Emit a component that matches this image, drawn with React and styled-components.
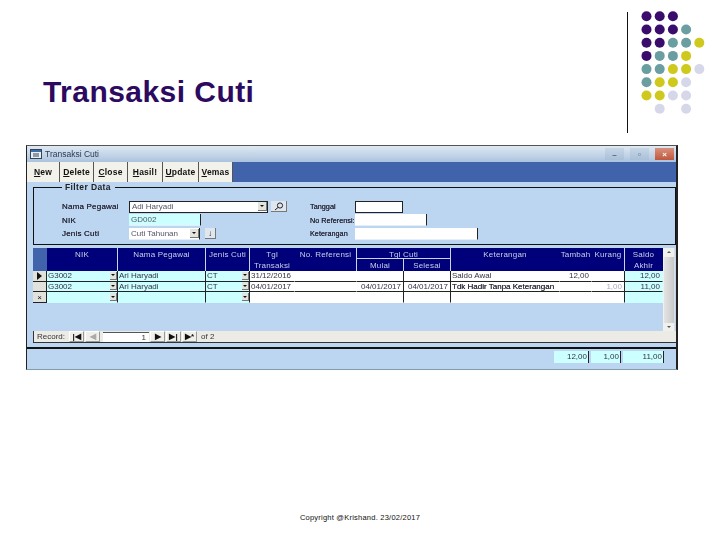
import React from "react";
import styled, { createGlobalStyle } from "styled-components";

const Global = createGlobalStyle`
  html, body { margin: 0; padding: 0; background: #fff; }
  * { box-sizing: border-box; }
`;

const Slide = styled.div`
  width: 720px; height: 540px; display: flex; flex-direction: column;
  background: #fff; font-family: "Liberation Sans", Arial, sans-serif; overflow: hidden;
`;
const Header = styled.header`
  height: 145px; flex: none; display: flex; justify-content: space-between; padding-left: 43px;
`;
const Title = styled.h1`
  margin: 75px 0 0; font-size: 30px; line-height: 34px; font-weight: 700; color: #2c0a60; letter-spacing: 0.45px;
`;
const Deco = styled.svg`width: 93px; height: 145px; flex: none; display: block;`;

const Win = styled.section`
  margin-left: 26px; width: 652px; height: 225px; flex: none; display: flex; flex-direction: column;
  background: #bcd5f0; border-left: 1px solid #222; border-right: 2px solid #222; border-bottom: 1px solid #7f9fa8;
  border-top: 1px solid #555; filter: blur(0.35px);
  font-size: 8px; color: #222;
`;
const TitleBar = styled.div`
  height: 16px; flex: none; display: flex; align-items: center; padding: 0 2px 0 3px; gap: 3px;
  background: linear-gradient(#dfe9f3, #b6cbe2 80%, #a9c2de); font-size: 8.5px; color: #2a3a55;
`;
const TitleText = styled.span`flex: 1;`;
const WinBtn = styled.span`
  width: 19px; height: 12px; margin-left: 3px; display: flex; align-items: center; justify-content: center;
  background: ${p => p.$close ? "linear-gradient(#d9907a,#c0573e)" : "linear-gradient(#c6d6e6,#a9c0d8)"};
  color: ${p => p.$close ? "#fff" : "#456"}; font-size: 8px; font-weight: 700;
`;
const Toolbar = styled.div`
  height: 20px; flex: none; display: flex; background: #4063ab;
`;
const ToolBtn = styled.button`
  width: ${p => p.$w}px; height: 20px; padding: 0; border: 0; border-right: 1px solid #555;
  background: #f2f1ea; font: 700 8.5px "Liberation Sans", Arial, sans-serif; color: #111; letter-spacing: .2px;
  u { text-underline-offset: 1px; }
`;
const Group = styled.fieldset`
  margin: 0 0 3px 6px; padding: 0 0 0 28px; width: 643px; height: 63px; flex: none; border: 1px solid #111; min-width: 0;
  display: block;
`;
const Legend = styled.legend`
  margin-left: 0; padding: 0 4px 0 3px; font-weight: 700; font-size: 8.5px; line-height: 11px; letter-spacing: .4px; color: #222;
`;
const FormCols = styled.div`display: flex; padding-top: 7px;`;
const FormCol = styled.div`
  display: grid; grid-template-columns: ${p => p.$label}px auto; grid-auto-rows: 13.5px; align-items: center; width: ${p => p.$w}px;
`;
const Label = styled.span`
  font-size: ${p => p.$tight ? 7.3 : 8}px; letter-spacing: ${p => p.$tight ? 0 : .2}px; white-space: nowrap; color: #2a2a3a; text-shadow: 0 0 .3px #2a2a3a;
`;
const FieldWrap = styled.div`display: flex; align-items: center; gap: ${p => p.$gap || 0}px;`;
const Field = styled.div`
  width: ${p => p.$w}px; height: 12px; padding-left: 2px; display: flex; align-items: center; justify-content: space-between; font-size: 8px;
  background: ${p => p.$cyan ? "#ccffff" : "#fff"}; color: #556;
  border-right: 1px solid #222; border-bottom: 1px solid ${p => p.$boxed ? "#222" : "#e6eef7"};
  ${p => p.$boxed ? "border-top:1px solid #222;border-left:1px solid #222;" : ""}
`;
const Drop = styled.span`
  width: ${p => p.$w || 9}px; height: ${p => p.$h || 9}px; flex: none; background: #e4e4de; border-right: 1px solid #777; border-bottom: 1px solid #777;
  display: flex; align-items: center; justify-content: center;
  &::after { content: ""; border: 2px solid transparent; border-top: 2.5px solid #111; border-bottom: 0; }
`;
const SquareBtn = styled.span`
  width: ${p => p.$w}px; height: 11px; background: #dfe6ee; border-right: 1px solid #777; border-bottom: 1px solid #777; display: flex; align-items: center; justify-content: center;
`;

const GridWrap = styled.div`margin-left: 6px; width: 643px; height: 95px; flex: none; display: flex; flex-wrap: wrap; align-content: flex-start;`;
const Table = styled.div`
  width: 630px; height: 83px; display: grid; grid-template-columns: 14px 71px 88px 44px 45px 62px 47px 47px 109px 32px 33px 38px;
  grid-template-rows: 11px 12px 10.5px 10.5px 11px 1fr; font-size: 8px;
`;
const Corner = styled.div`grid-row: 1 / span 2; background: #4063ab;`;
const Head = styled.div`
  grid-row: ${p => p.$row || "1 / span 2"}; grid-column: ${p => p.$col || "auto"};
  background: #00007a; color: #c6cfe6; text-align: center; line-height: 11px; padding-top: 1px; letter-spacing: .2px;
  border-right: 1px solid ${p => p.$noLine ? "#00007a" : "#c9d4ea"};
  border-bottom: ${p => p.$under ? "1px solid #c9d4ea" : "0"};
`;
const Sel = styled.div`
  background: #e2e2dc; border-bottom: 1px solid #222; border-right: 1px solid #222; display: flex; align-items: center; justify-content: center; font-size: 8px; color: #111;
`;
const Arrow = styled.span`border-left: 5px solid #111; border-top: 4px solid transparent; border-bottom: 4px solid transparent;`;
const Cell = styled.div`
  display: flex; align-items: center; justify-content: ${p => p.$end ? "flex-end" : "space-between"};
  padding: 0 ${p => p.$end ? 2 : 0}px 0 1px; white-space: nowrap;
  background: ${p => p.$cyan ? "#ccffff" : "#fff"}; color: ${p => p.$faint ? "#aab" : "#334"};
  border-bottom: 1px solid ${p => p.$last ? "transparent" : "#222"};
  border-right: 1px solid ${p => p.$line ? "#222" : "transparent"};
  text-shadow: ${p => p.$bold ? "0 0 .4px #222" : "none"};
`;
const Empty = styled.div`grid-column: 1 / -1;`;
const Scroll = styled.div`
  width: 12px; height: 83px; background: #f0f0ec; display: flex; flex-direction: column; align-items: center; justify-content: space-between; padding: 3px 0; border-right: 1px solid #ddd;
`;
const Thumb = styled.div`width: 10px; height: 66px; background: linear-gradient(90deg,#e4e4e4,#c8c8c8);`;
const Tri = styled.span`
  border-left: 2px solid transparent; border-right: 2px solid transparent;
  ${p => p.$down ? "border-top: 2px solid #555;" : "border-bottom: 2px solid #555;"}
`;
const Nav = styled.div`
  width: 643px; height: 12px; display: flex; align-items: center; gap: 1px; background: #ecebe6; border-bottom: 1px solid #333; border-left: 1px solid #333;
  padding-left: 3px; font-size: 8px; color: #333;
`;
const NavLabel = styled.span`width: 28px; margin-right: 3px; white-space: nowrap;`;
const NavBtn = styled.span`
  width: 15px; height: 11px; background: #f0efe9; border: 1px solid #999; border-top-color: #fff; border-left-color: #fff;
  display: flex; align-items: center; justify-content: center; font-size: 8px; font-weight: 700; color: ${p => p.$off ? "#aaa" : "#111"}; line-height: 1;
`;
const RecBox = styled.span`
  width: 46px; height: 10px; background: #fff; border-top: 1px solid #555; text-align: right; padding-right: 3px; line-height: 9px; margin-left: 2px;
`;
const NavOf = styled.span`margin-left: 3px; white-space: nowrap;`;
const Rule = styled.div`height: 2px; flex: none; background: #111; margin-top: 4px;`;
const Totals = styled.div`flex: 1; display: flex; justify-content: flex-end; align-items: flex-start; padding: 2px 12px 0 0; gap: 2px;`;
const Total = styled.div`
  width: ${p => p.$w}px; height: 12px; background: #ccffff; border-right: 1px solid #222; text-align: right; padding-right: 1px; line-height: 12px; font-size: 8px; color: #334;
`;
const Foot = styled.footer`
  margin-top: auto; margin-bottom: 18px; text-align: center; font-size: 7.5px; line-height: 9px; letter-spacing: .23px; color: #111;
`;

const P = "#3a0d6c", T = "#6b9ea1", Y = "#cfc91d", L = "#d6d8ea";
const dots = [
  [P, P, P], [P, P, P, T], [P, P, T, T, Y], [P, T, T, Y], [T, T, Y, Y, L],
  [T, Y, Y, L], [Y, Y, L, L], [null, L, null, L],
];

const rows = [
  { sel: <Arrow />, tgl: "31/12/2016", m: "", s: "", ket: "Saldo Awal", t: "12,00", k: "", a: "12,00" },
  { sel: "", tgl: "04/01/2017", m: "04/01/2017", s: "04/01/2017", ket: "Tdk Hadir Tanpa Keterangan", t: "", k: "1,00", a: "11,00", b: true },
];

export default function App() {
  return (
    <Slide>
      <Global />
      <Header>
        <Title>Transaksi Cuti</Title>
        <Deco viewBox="0 0 93 145">
          <line x1="0.5" y1="12" x2="0.5" y2="133" stroke="#111" strokeWidth="1" />
          {dots.map((r, i) => r.map((c, j) => c && (
            <circle key={i + "-" + j} cx={19.5 + j * 13.2} cy={16.3 + i * 13.2} r="5" fill={c} />
          )))}
        </Deco>
      </Header>

      <Win>
        <TitleBar>
          <svg width="12" height="10" viewBox="0 0 12 10">
            <rect x=".5" y=".5" width="11" height="9" fill="#e8eef5" stroke="#345" />
            <rect x="1" y="1" width="10" height="2" fill="#3a6ea5" />
            <path d="M3 5h6M3 7h6" stroke="#345" />
          </svg>
          <TitleText>Transaksi Cuti</TitleText>
          <WinBtn>–</WinBtn>
          <WinBtn>▫</WinBtn>
          <WinBtn $close>×</WinBtn>
        </TitleBar>
        <Toolbar>
          <ToolBtn $w={33}><u>N</u>ew</ToolBtn>
          <ToolBtn $w={34}><u>D</u>elete</ToolBtn>
          <ToolBtn $w={34}><u>C</u>lose</ToolBtn>
          <ToolBtn $w={35}><u>H</u>asil!</ToolBtn>
          <ToolBtn $w={36}><u>U</u>pdate</ToolBtn>
          <ToolBtn $w={34}><u>V</u>emas</ToolBtn>
        </Toolbar>

        <Group>
          <Legend>Filter Data</Legend>
          <FormCols>
            <FormCol $label={67} $w={248}>
              <Label>Nama Pegawai</Label>
              <FieldWrap $gap={3}>
                <Field $w={139} $boxed>Adi Haryadi<Drop /></Field>
                <SquareBtn $w={16}>
                  <svg width="10" height="9" viewBox="0 0 10 9"><circle cx="6" cy="3.5" r="2.6" fill="none" stroke="#222" /><path d="M4 5.5 1 8" stroke="#222" /></svg>
                </SquareBtn>
              </FieldWrap>
              <Label>NIK</Label>
              <Field $w={72} $cyan>GD002</Field>
              <Label>Jenis Cuti</Label>
              <FieldWrap $gap={5}>
                <Field $w={71}>Cuti Tahunan<Drop /></Field>
                <SquareBtn $w={11}>↓</SquareBtn>
              </FieldWrap>
            </FormCol>
            <FormCol $label={45} $w={200}>
              <Label $tight>Tanggal</Label>
              <Field $w={48} $boxed />
              <Label $tight>No Referensi:</Label>
              <Field $w={72} />
              <Label $tight>Keterangan</Label>
              <Field $w={123} />
            </FormCol>
          </FormCols>
        </Group>

        <GridWrap>
          <Table>
            <Corner />
            <Head>NIK</Head>
            <Head>Nama Pegawai</Head>
            <Head>Jenis Cuti</Head>
            <Head $noLine>Tgl<br />Transaksi</Head>
            <Head>No. Referensi</Head>
            <Head $col="span 2" $row="1" $under>Tgl Cuti</Head>
            <Head $row="1 / span 2" $col="9" $noLine>Keterangan</Head>
            <Head $row="1 / span 2" $col="10" $noLine>Tambah</Head>
            <Head $row="1 / span 2" $col="11">Kurang</Head>
            <Head $row="1 / span 2" $col="12" $noLine>Saldo<br />Akhir</Head>
            <Head $row="2" $col="7">Mulai</Head>
            <Head $row="2" $col="8">Selesai</Head>

            {rows.map((r, i) => (
              <React.Fragment key={i}>
                <Sel>{r.sel}</Sel>
                <Cell $cyan $line>G3002<Drop $w={7} $h={8} /></Cell>
                <Cell $cyan $line>Ari Haryadi</Cell>
                <Cell $cyan $line>CT<Drop $w={7} $h={8} /></Cell>
                <Cell>{r.tgl}</Cell>
                <Cell />
                <Cell $end $line>{r.m}</Cell>
                <Cell $end $line>{r.s}</Cell>
                <Cell $bold={r.b}>{r.ket}</Cell>
                <Cell $end>{r.t}</Cell>
                <Cell $end $line $faint>{r.k}</Cell>
                <Cell $cyan $end>{r.a}</Cell>
              </React.Fragment>
            ))}
            <Sel>×</Sel>
            <Cell $cyan $line $last><span /><Drop $w={7} $h={8} /></Cell>
            <Cell $cyan $line $last />
            <Cell $cyan $line $last><span /><Drop $w={7} $h={8} /></Cell>
            <Cell $last />
            <Cell $last />
            <Cell $last $line />
            <Cell $last $line />
            <Cell $last />
            <Cell $last />
            <Cell $last $line />
            <Cell $cyan $last />
            <Empty />
          </Table>
          <Scroll><Tri /><Thumb /><Tri $down /></Scroll>
          <Nav>
            <NavLabel>Record:</NavLabel>
            <NavBtn>|◀</NavBtn>
            <NavBtn $off>◀</NavBtn>
            <RecBox>1</RecBox>
            <NavBtn>▶</NavBtn>
            <NavBtn>▶|</NavBtn>
            <NavBtn>▶*</NavBtn>
            <NavOf>of 2</NavOf>
          </Nav>
        </GridWrap>

        <Rule />
        <Totals>
          <Total $w={35}>12,00</Total>
          <Total $w={30}>1,00</Total>
          <Total $w={41}>11,00</Total>
        </Totals>
      </Win>

      <Foot>Copyright @Krishand. 23/02/2017</Foot>
    </Slide>
  );
}
